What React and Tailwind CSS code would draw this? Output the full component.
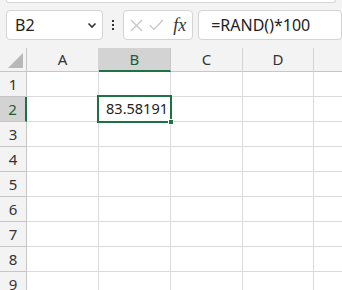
import React from 'react';

const COLS = ['A', 'B', 'C', 'D', ''];
const ROWS = [1, 2, 3, 4, 5, 6, 7, 8, 9];

const ChevronDown = () => (
  <svg width="10" height="10" viewBox="0 0 10 10" fill="none" stroke="#333" strokeWidth="1.6">
    <path d="M1.5 3.5l3.5 3.5 3.5-3.5" />
  </svg>
);

const App = () => {
  return (
    <div className="w-[342px] h-[290px] overflow-hidden bg-white font-['Noto_Sans',sans-serif] text-[#222]">
      {/* Toolbar / formula bar */}
      <div className="h-[48px] bg-[#f3f3f3] flex flex-col">
        <div className="mx-[6px] h-[3px] bg-white border-x border-b border-[#d6d6d6] rounded-b-[4px]" />
        <div className="flex items-center pl-[6px] mt-[7px] h-[30px]">
          {/* Name box */}
          <div className="w-[101px] h-[30px] bg-white border border-[#d4d4d4] rounded-[4px] flex items-center justify-between pl-[8px] pr-[5px]">
            <span className="text-[16px] leading-none text-[#222]">B2</span>
            <ChevronDown />
          </div>
          {/* Dots */}
          <div className="w-[21px] flex flex-col items-center gap-[2px]">
            <span className="w-[2px] h-[2px] bg-[#333]" />
            <span className="w-[2px] h-[2px] bg-[#333]" />
            <span className="w-[2px] h-[2px] bg-[#333]" />
          </div>
          {/* Buttons */}
          <div className="w-[73px] h-[30px] bg-white border border-[#d4d4d4] rounded-[4px] flex items-center pl-[6px] gap-[6px]">
            <svg width="13" height="13" viewBox="0 0 13 13" stroke="#c4c4c4" strokeWidth="1.2" fill="none">
              <path d="M1 1l11 11M12 1L1 12" />
            </svg>
            <svg width="15" height="12" viewBox="0 0 15 12" stroke="#c4c4c4" strokeWidth="1.2" fill="none">
              <path d="M1 6.5l4 4L14 1" />
            </svg>
            <span className="ml-[3px] font-['Liberation_Serif',serif] italic text-[18px] leading-none text-[#333]">fx</span>
          </div>
          {/* Formula input */}
          <div className="ml-[5px] w-[150px] h-[30px] bg-white border border-[#d4d4d4] rounded-[4px] flex items-center pl-[12px]">
            <span className="text-[16px] leading-none text-[#222]">=RAND()*100</span>
          </div>
        </div>
      </div>

      {/* Grid */}
      <div className="grid grid-cols-[27px_72px_72px_72px_71px_48px]">
        {/* Corner */}
        <div className="h-[24px] bg-[#f3f3f3] border-r border-b border-[#c6c6c6] flex items-end justify-end p-[3px]">
          <div className="w-0 h-0 border-l-[15px] border-l-transparent border-b-[15px] border-b-[#b8b8b8]" />
        </div>
        {COLS.map((c) =>
          c === 'B' ? (
            <div
              key={c}
              className="h-[24px] bg-[#d3d3d3] border-r border-[#c6c6c6] border-b-2 border-b-[#1e7145] flex items-center justify-center text-[15px] text-[#1e5b38]"
            >
              {c}
            </div>
          ) : (
            <div
              key={c || 'E'}
              className="h-[24px] bg-[#f3f3f3] border-r border-b border-[#d4d4d4] border-b-[#c6c6c6] flex items-center justify-center text-[15px] text-[#333]"
            >
              {c}
            </div>
          )
        )}

        {ROWS.map((r) => (
          <React.Fragment key={r}>
            {r === 2 ? (
              <div className="h-[25px] bg-[#d3d3d3] border-b border-[#c6c6c6] border-r-2 border-r-[#1e7145] flex items-center justify-center text-[15px] text-[#1e5b38]">
                {r}
              </div>
            ) : (
              <div className="h-[25px] bg-[#f3f3f3] border-b border-r border-[#c6c6c6] flex items-center justify-center text-[15px] text-[#333]">
                {r}
              </div>
            )}
            {COLS.map((c) => {
              const selected = r === 2 && c === 'B';
              return (
                <div key={c || 'E'} className="h-[25px] border-r border-b border-[#dadada] relative">
                  {selected && (
                    <div className="absolute -left-[2px] -top-[2px] w-[75px] h-[28px] border-2 border-[#1e7145] flex items-center justify-end pr-[2px] text-[14.5px] text-[#222] z-10">
                      83.58191
                      <span className="absolute -right-[4px] -bottom-[4px] w-[6px] h-[6px] bg-[#1e7145] border border-white" />
                    </div>
                  )}
                </div>
              );
            })}
          </React.Fragment>
        ))}
      </div>
    </div>
  );
};

export default App;
